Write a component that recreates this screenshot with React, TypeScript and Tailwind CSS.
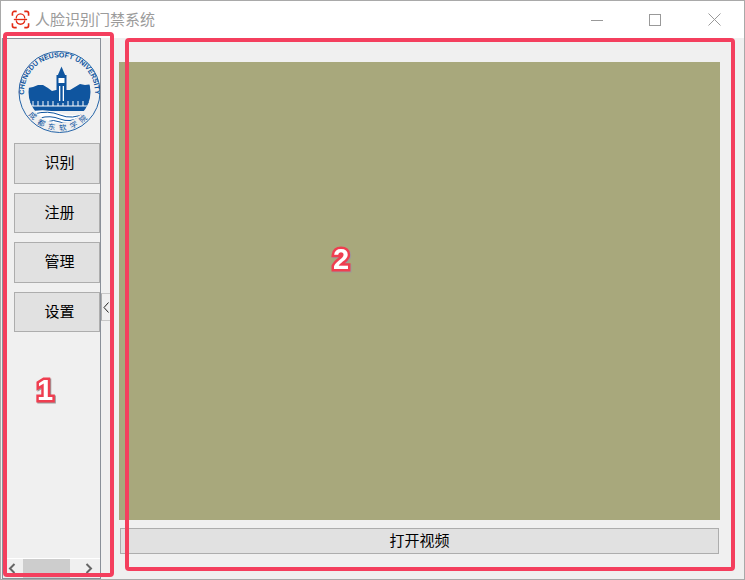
const cjk = 'font-["Noto_Sans_CJK_SC","Noto_Sans",sans-serif]'

function AppIcon() {
  return (
    <svg width="19" height="19" viewBox="0 0 20 20" fill="none" stroke="#e32a14" strokeWidth="1.700">
      <path d="M1.500 6V3.500a2 2 0 0 1 2-2H6M14 1.500h2.500a2 2 0 0 1 2 2V6M18.500 14v2.500a2 2 0 0 1-2 2H14M6 18.500H3.500a2 2 0 0 1-2-2V14" />
      <path d="M5.500 9c0-3 2-5 4.500-5s4.500 2 4.500 5M5.500 11c.4 2.500 2.200 4 4.500 4s4.100-1.500 4.500-4" strokeWidth="1.400" />
      <path d="M3 10h14" strokeWidth="1.400" />
    </svg>
  )
}

function Logo() {
  const blue = '#0f559f'
  return (
    <svg className="block" width="83" height="85" viewBox="17 50 83 85">
      <defs>
        <path id="logo-top" d="M25.500 103 A35.500 35.500 0 1 1 93.500 103" />
        <path id="logo-bottom" d="M21 92 A38.500 38.500 0 0 0 98 92" />
        <clipPath id="logo-inner">
          <circle cx="59.500" cy="92" r="31" />
        </clipPath>
      </defs>
      <circle cx="59.500" cy="92" r="40.500" fill="none" stroke={blue} strokeWidth="0.900" />
      <text fontFamily="Liberation Sans, sans-serif" fontSize="7" fontWeight="700" fill={blue} textAnchor="middle">
        <textPath href="#logo-top" startOffset="50%">CHENGDU NEUSOFT UNIVERSITY</textPath>
      </text>
      <text fontFamily="Noto Sans CJK SC, sans-serif" fontSize="7.500" fill={blue} textAnchor="middle" letterSpacing="4.500">
        <textPath href="#logo-bottom" startOffset="50%">成都东软学院</textPath>
      </text>
      <g clipPath="url(#logo-inner)">
        <path d="M28 88 L33 87 L38 85 L43 85 L48 88 L52 91 L56 90 L66 90 L70 90 L75 87 L80 84 L85 85 L92 84 V103 H28 Z" fill={blue} />
        <rect x="28" y="102" width="63" height="9" fill={blue} />
        <path d="M28 106 H91" stroke="#fff" strokeWidth="1.200" />
        <path d="M33 101v5M38 101v5M43 101v5M48 101v5M53 101v5M58 101v5M63 101v5M68 101v5M73 101v5M78 101v5M83 101v5" stroke="#fff" strokeWidth="1" />
        <path d="M29 112 Q44 108 60 113 T91 111 V124 H29 Z" fill="#fff" />
        <path d="M34 114 Q48 110 60 115 T86 113M40 118 Q50 115 60 119 T80 117M46 122 Q54 119 60 122 T74 121" fill="none" stroke={blue} strokeWidth="1" />
      </g>
      <path d="M61.500 66.500 L65.500 76 H57.500 Z" fill={blue} />
      <rect x="56.500" y="75" width="10" height="28" fill={blue} />
      <rect x="58.500" y="78" width="6" height="5" fill="#fff" />
      <rect x="59" y="86" width="1.300" height="15" fill="#fff" />
      <rect x="62.700" y="86" width="1.300" height="15" fill="#fff" />
    </svg>
  )
}

function SideButton({ label, className }: { label: string; className: string }) {
  return (
    <button className={`w-[86px] pl-[5px] pb-[2px] flex items-center justify-center border border-[#adadad] bg-[#e1e1e1] text-[15px] text-black ${className}`}>
      {label}
    </button>
  )
}

function Badge({ text, className }: { text: string; className: string }) {
  return (
    <span
      className={`absolute font-["Liberation_Sans",sans-serif] text-[29px] leading-none font-bold text-white [-webkit-text-stroke:5px_#ef3e50] [paint-order:stroke_fill] [filter:drop-shadow(1px_1px_0_#9a9a9a)] ${className}`}
    >
      {text}
    </span>
  )
}

export default function App() {
  return (
    <div className={`relative w-[745px] h-[580px] overflow-hidden border border-[#a9a9a9] bg-[#f0f0f0] ${cjk}`}>
      {/* Title bar */}
      <div className="flex items-center h-[37px] bg-white">
        <div className="ml-[10px]">
          <AppIcon />
        </div>
        <span className="ml-[5px] text-[15px] text-[#9b9b9b]">人脸识别门禁系统</span>
        <div className="ml-auto flex items-center">
          <svg width="12" height="12" viewBox="0 0 12 12" className="mr-[46px]" stroke="#999" fill="none">
            <path d="M0 6.500h12" />
          </svg>
          <svg width="12" height="12" viewBox="0 0 12 12" className="mr-[47px]" stroke="#999" fill="none">
            <rect x="0.500" y="0.500" width="11" height="11" />
          </svg>
          <svg width="13" height="13" viewBox="0 0 13 13" className="mr-[23px]" stroke="#999" fill="none">
            <path d="M0.500 0.500l12 12M12.500 0.500l-12 12" />
          </svg>
        </div>
      </div>

      <div className="flex h-[541px]">
        {/* Left panel */}
        <div className="ml-px w-[99px] flex flex-col border border-[#8a9099]">
          <div className="pl-[14px] pt-[11px]">
            <Logo />
          </div>
          <div className="pl-[11px] pt-[8px] flex flex-col gap-[9px]">
            <SideButton label="识别" className="h-[41px]" />
            <SideButton label="注册" className="h-[40px]" />
            <SideButton label="管理" className="h-[41px]" />
            <SideButton label="设置" className="h-[40px]" />
          </div>
          {/* Horizontal scrollbar */}
          <div className="mt-auto h-[20px] flex items-center border-t border-white">
            <svg width="9" height="11" viewBox="0 0 9 11" className="ml-[4px]" fill="none" stroke="#666" strokeWidth="2">
              <path d="M7.500 1L3 5.500 7.500 10" />
            </svg>
            <div className="ml-[7px] w-[47px] h-full bg-[#cdcdcd]" />
            <svg width="9" height="11" viewBox="0 0 9 11" className="ml-[15px]" fill="none" stroke="#666" strokeWidth="2">
              <path d="M1.500 1L6 5.500 1.500 10" />
            </svg>
          </div>
        </div>

        {/* Splitter handle */}
        <div className="w-[10px] pt-[255px]">
          <div className="h-[28px] flex items-center justify-center border border-[#c8c8c8] border-l-[#adadad]">
            <svg width="6" height="11" viewBox="0 0 6 11" fill="none" stroke="#222">
              <path d="M5.500 0.500L1 5.500l4.500 5" />
            </svg>
          </div>
        </div>

        {/* Video area */}
        <div className="pl-[8px] pt-[24px] flex flex-col">
          <div className="w-[601px] h-[458px] bg-[#a8a87c]" />
          <button className="ml-px mt-[8px] w-[599px] h-[26px] pb-[2px] flex items-center justify-center border border-[#adadad] bg-[#e1e1e1] text-[15px] text-black">
            打开视频
          </button>
        </div>
      </div>

      {/* Annotations drawn over the screenshot */}
      <div className="absolute left-[2px] top-[31px] w-[111px] h-[545px] rounded-[4px] border-[4px] border-[#f43f5e]" />
      <div className="absolute left-[124px] top-[37px] w-[610px] h-[533px] rounded-[4px] border-[4px] border-[#f43f5e]" />
      <Badge text="1" className="left-[36px] top-[375px]" />
      <Badge text="2" className="left-[332px] top-[244px]" />
    </div>
  )
}
